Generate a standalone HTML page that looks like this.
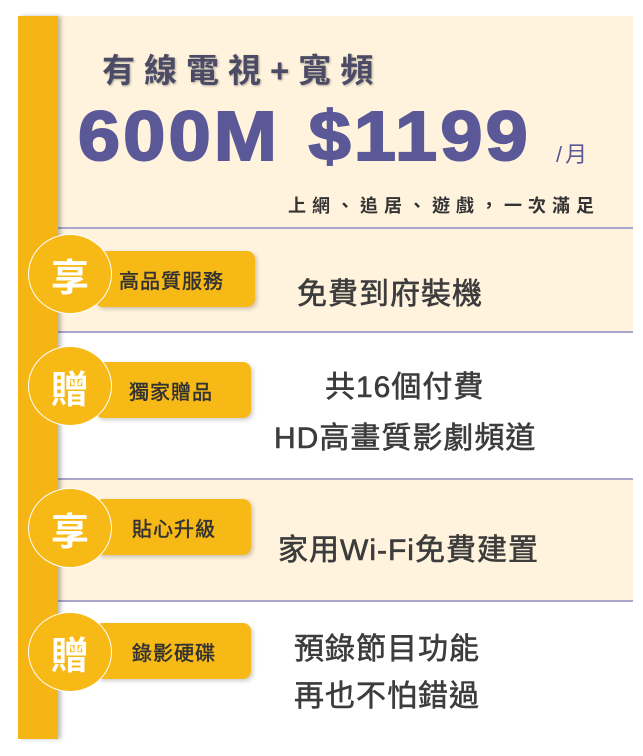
<!DOCTYPE html>
<html><head><meta charset="utf-8"><style>
*{margin:0;padding:0;box-sizing:border-box}
body{width:643px;height:756px;background:#fff;position:relative;overflow:hidden;font-family:"Liberation Sans","Noto Sans CJK TC",sans-serif}
.abs{position:absolute}
.cream{background:#fff3dd;left:58px;width:575px}
.line{left:58px;width:575px;height:2px;background:#a8a6cc}
.bar{left:18px;top:16px;width:40px;height:723px;background:#f5b515;box-shadow:3px 0 4px rgba(0,0,0,.25)}
.pill{left:95px;height:56px;background:#f7b916;border-radius:8px;box-shadow:2px 2px 4px rgba(0,0,0,.2);color:#333;font-size:20px;font-weight:normal;-webkit-text-stroke:.5px #333;display:flex;align-items:center;letter-spacing:1px}
.circ{left:28px;width:84px;height:80px;border-radius:50%;background:#f7b916;border:1.5px solid #fff;color:#fff;font-size:38px;font-weight:bold;display:flex;align-items:center;justify-content:center}
.txt{color:#3c3c3c;font-size:30px;font-weight:normal;-webkit-text-stroke:.6px #3c3c3c;white-space:nowrap;line-height:1;letter-spacing:1px}
</style></head><body>
<div class="abs cream" style="top:16px;height:212px"></div>
<div class="abs cream" style="top:228px;height:104px"></div>
<div class="abs cream" style="top:479px;height:122px"></div>
<div class="abs line" style="top:227px"></div>
<div class="abs line" style="top:331px"></div>
<div class="abs line" style="top:478px"></div>
<div class="abs line" style="top:600px"></div>
<div class="abs bar"></div>

<div class="abs" style="left:102px;top:44px;font-size:33px;font-weight:bold;color:#4b4b66;letter-spacing:9px;text-shadow:1px 1px 2px rgba(0,0,0,.3);white-space:nowrap">有線電視+寬頻</div>
<div class="abs" style="left:78px;top:96px;font-size:70px;font-weight:900;color:#5b5898;letter-spacing:3px;word-spacing:4px;white-space:nowrap;transform:scaleX(1.08);transform-origin:left;-webkit-text-stroke:2px #5b5898">600M $1199</div>
<div class="abs" style="left:556px;top:137px;font-size:22px;color:#5b5898;letter-spacing:3px">/月</div>
<div class="abs" style="left:288px;top:192px;font-size:18px;font-weight:bold;color:#333;letter-spacing:6px;white-space:nowrap">上網、追居、遊戲，一次滿足</div>

<div class="abs pill" style="top:251px;width:160px;padding-left:24px">高品質服務</div>
<div class="abs circ" style="top:234px">享</div>
<div class="abs txt" style="left:297px;top:280px">免費到府裝機</div>

<div class="abs pill" style="top:362px;width:156px;padding-left:34px">獨家贈品</div>
<div class="abs circ" style="top:346px">贈</div>
<div class="abs txt" style="left:325px;top:373px">共16個付費</div>
<div class="abs txt" style="left:274px;top:424px">HD高畫質影劇頻道</div>

<div class="abs pill" style="top:499px;width:156px;padding-left:37px">貼心升級</div>
<div class="abs circ" style="top:488px">享</div>
<div class="abs txt" style="left:278px;top:536px">家用Wi-Fi免費建置</div>

<div class="abs pill" style="top:623px;width:156px;padding-left:37px">錄影硬碟</div>
<div class="abs circ" style="top:612px">贈</div>
<div class="abs txt" style="left:294px;top:635px">預錄節目功能</div>
<div class="abs txt" style="left:294px;top:682px">再也不怕錯過</div>
</body></html>
